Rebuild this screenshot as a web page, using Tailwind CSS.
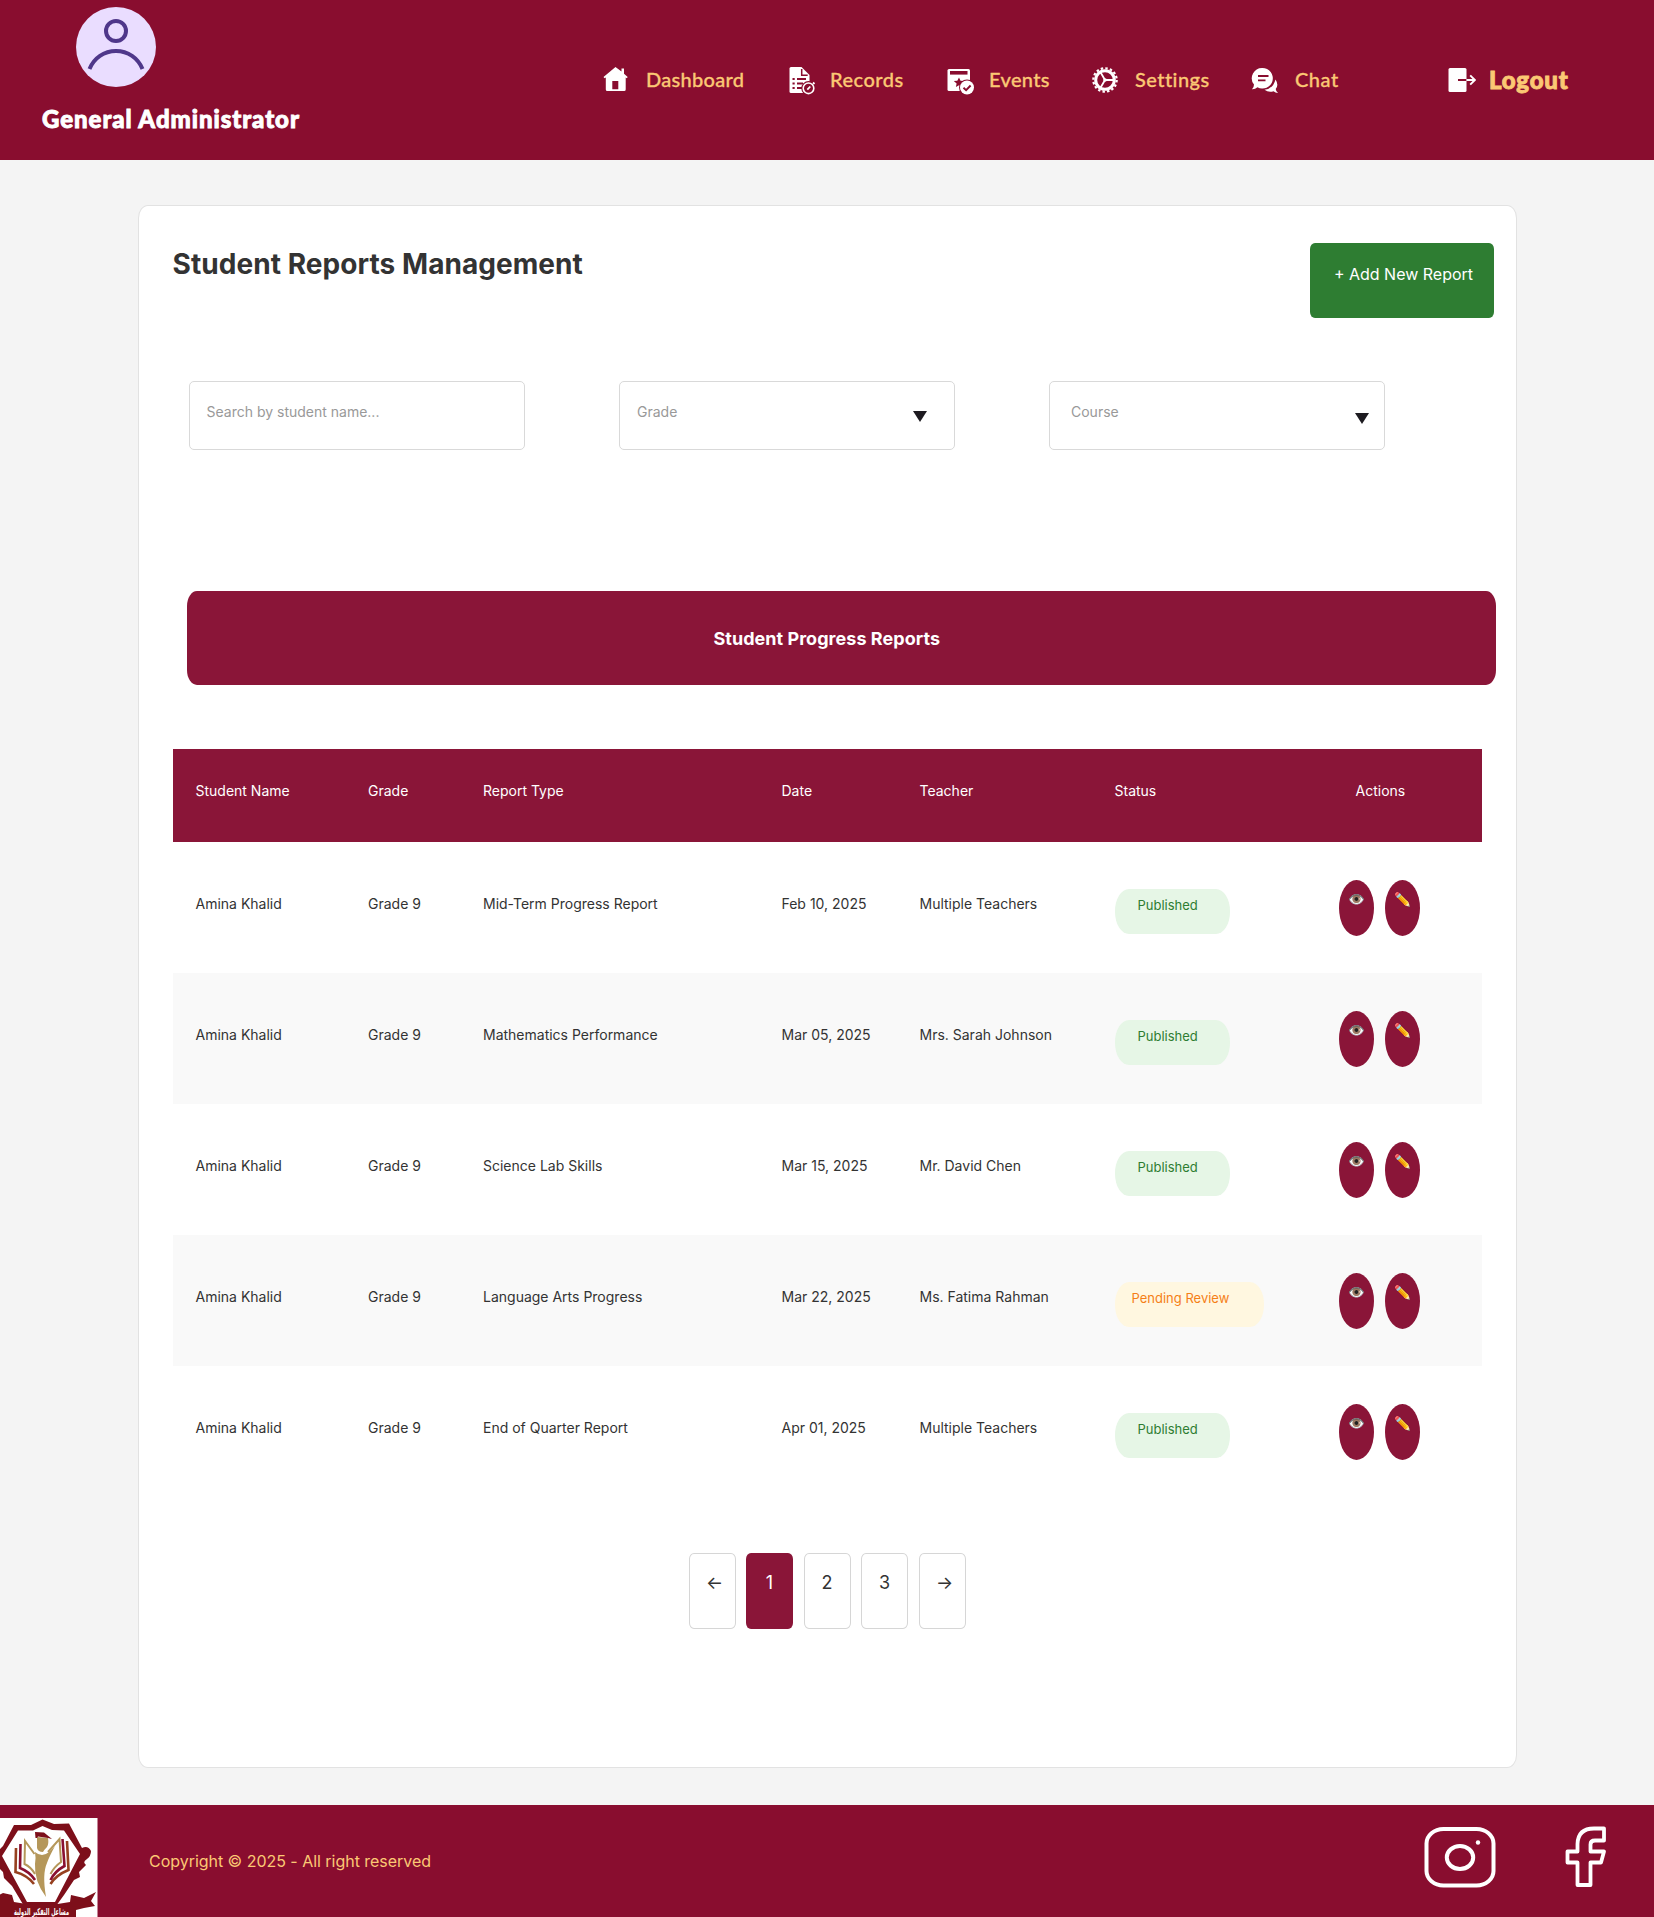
<!DOCTYPE html>
<html lang="en">
<head>
<meta charset="utf-8">
<title>Student Reports Management</title>
<script src="https://cdn.jsdelivr.net/npm/@tailwindcss/browser@4"></script>
</head>
<body class="w-[1654px] h-[1917px] overflow-hidden bg-[#f4f4f4] font-['Inter',sans-serif] text-[#333333]">

<header class="flex h-[160px] bg-[#890d2f] font-['Lato',sans-serif]">
  <div class="w-[603px] pl-[42px] pt-[7px] shrink-0">
    <svg class="ml-[34px] block" width="80" height="80" viewBox="0 0 80 80" fill="none">
      <circle cx="40" cy="40" r="40" fill="#eaddff"/>
      <circle cx="40" cy="24" r="10" stroke="#4f378a" stroke-width="4"/>
      <path d="M13.5 62C18 51 28 44 40 44s22 7 26.500 18" stroke="#4f378a" stroke-width="4"/>
    </svg>
    <div class="mt-[16px] w-max text-[24px] leading-[32px] font-black text-white tracking-[0.95px] [-webkit-text-stroke:0.9px_white]">General Administrator</div>
  </div>
  <nav class="flex h-[160px] items-center text-[20px] font-medium text-[#fbc874]">
    <a class="flex w-[186px] items-center">
      <span class="w-[43px]"><svg width="26" height="30" viewBox="0 0 26 30" fill="#fff"><path d="M12.500 2 L18.500 6.500 V3.500 H21 V8.800 L24.700 12 L23.800 13.200 L22.700 12.500 V24.500 Q22.700 26 21.200 26 H4.300 Q2.800 26 2.800 24.500 V12.500 L1.600 13.200 L.5 12 Z M9.300 16 V24.200 H15.300 V16 Z" fill-rule="evenodd"/></svg></span>
      <span class="pb-[2px] tracking-[0.3px] [-webkit-text-stroke:0.3px_#fbc874]">Dashboard</span>
    </a>
    <a class="flex w-[158px] items-center">
      <span class="w-[41px]"><svg width="28" height="30" viewBox="0 0 28 30" fill="none"><path d="M2 2H12.500L20.500 10V28H2Q.5 28 .5 26.500V3.500Q.5 2 2 2Z" fill="#fff"/><path d="M12.700 4v6.200h6" stroke="#890d2f" stroke-width="1.500"/><path d="M3.500 14h2.200M8 14h9M3.500 18.500h2.200M8 18.500h6M3.500 23h2.200M8 23h5" stroke="#890d2f" stroke-width="1.800"/><circle cx="19.500" cy="23.300" r="7.200" fill="#890d2f"/><circle cx="19.500" cy="23.300" r="5.300" stroke="#fff" stroke-width="1.600"/><path d="M18.300 24.700l3-3.200M24 17.500l1.500 1.500" stroke="#fff" stroke-width="1.800"/></svg></span>
      <span class="pb-[2px] tracking-[0.5px] [-webkit-text-stroke:0.3px_#fbc874]">Records</span>
    </a>
    <a class="flex w-[145px] items-center">
      <span class="w-[42px]"><svg width="28" height="30" viewBox="0 0 28 30" fill="none"><path d="M2 4H21.500Q23 4 23 5.500V26H2Q.5 26 .5 24.500V5.500Q.5 4 2 4Z" fill="#fff"/><path d="M3 6h17.500v3.600H3z" fill="#890d2f"/><path d="M12 12.500l1.500 3.200 3.500.4-2.600 2.400.7 3.500-3.100-1.700-3.100 1.700.7-3.500L6.800 16.100l3.500-.4z" fill="#890d2f"/><circle cx="20" cy="22.500" r="8" fill="#890d2f"/><circle cx="20" cy="22.500" r="7" fill="#fff"/><path d="M16.500 22.700l2.600 2.400 4.500-4.600" stroke="#890d2f" stroke-width="1.900"/></svg></span>
      <span class="pb-[2px] tracking-[0.35px] [-webkit-text-stroke:0.3px_#fbc874]">Events</span>
    </a>
    <a class="flex w-[159px] items-center">
      <span class="w-[43px]"><svg width="26" height="26" viewBox="0 0 26 26" fill="none" stroke="#fff"><circle cx="13" cy="13" r="9.300" stroke-width="3"/><circle cx="13" cy="13" r="11.700" stroke-width="2.200" stroke-dasharray="2.450 2.139"/><path d="M13 13h9.500M13 13L8.200 4.800M13 13L8.200 21.200" stroke-width="1.800"/><circle cx="13" cy="13" r="1.800" fill="#fff" stroke="none"/></svg></span>
      <span class="pb-[2px] tracking-[0.45px] [-webkit-text-stroke:0.3px_#fbc874]">Settings</span>
    </a>
    <a class="flex w-[197px] items-center">
      <span class="w-[44px]"><svg width="28" height="28" viewBox="0 0 28 28" fill="none"><path d="M11.500 2a10.300 10.300 0 1 1-5 19.300Q4 23.500 1 23.300 3 21.500 3 18.600A10.300 10.300 0 0 1 11.500 2Z" fill="#fff"/><path d="M7 10h10.500M7 14.300h7.500" stroke="#890d2f" stroke-width="1.800"/><path d="M24.500 13.500q3.600 5.500.2 9.500.3 2.500 2.300 4-2.300.1-4.500-1.700-5 1.600-9-1.600 8.500-.7 11-10.200Z" fill="#fff"/></svg></span>
      <span class="pb-[2px] tracking-[0.5px] [-webkit-text-stroke:0.3px_#fbc874]">Chat</span>
    </a>
    <a class="flex items-center text-[24px] font-black">
      <span class="w-[41px]"><svg width="28" height="26" viewBox="0 0 28 26" fill="none"><path d="M2 1H17Q18.500 1 18.500 2.500V23.500Q18.500 25 17 25H2Q.5 25 .5 23.500V2.500Q.5 1 2 1Z" fill="#fff"/><path d="M10 13h8.500" stroke="#890d2f" stroke-width="2"/><path d="M18.500 13h8M22.200 8.300l4.700 4.700-4.700 4.700" stroke="#fff" stroke-width="1.900"/></svg></span>
      <span class="tracking-[0.8px] [-webkit-text-stroke:0.9px_#fbc874]">Logout</span>
    </a>
  </nav>
</header>

<main class="mx-auto mt-[45px] h-[1562.500px] w-[1379px] rounded-[10px/13px] border border-[#e2e2e2] bg-white">
  <div class="flex h-[112.500px] items-start justify-between pl-[34px] pr-[22px] pt-[37px]">
    <h1 class="mt-[4px] text-[28px] leading-[34px] font-bold tracking-[0.06px]">Student Reports Management</h1>
    <button class="h-[75px] w-[184px] rounded-[5px/6px] bg-[#2e7d32] pl-[4px] pb-[14px] text-[16px] text-white">+ Add New Report</button>
  </div>

  <div class="mt-[62.500px] flex gap-[93.500px] pl-[50px] text-[14px] text-[#999999]">
    <div class="flex h-[69px] w-[336.500px] items-center rounded-[5px] border-[1.500px] border-[#d9d9d9] pb-[9px] pl-[17px]">Search by student name...</div>
    <div class="flex h-[69px] w-[336.500px] items-center justify-between rounded-[5px] border-[1.500px] border-[#d9d9d9] pb-[9px] pl-[17.500px] pr-[27px]">Grade
      <svg class="mt-[10px]" width="14" height="11" viewBox="0 0 14 11"><path d="M0 0H14L7 11Z" fill="#1d1b20"/></svg></div>
    <div class="flex h-[69px] w-[336.500px] items-center justify-between rounded-[5px] border-[1.500px] border-[#d9d9d9] pb-[9px] pl-[21.500px] pr-[15px]">Course
      <svg class="mt-[14px]" width="14" height="11" viewBox="0 0 14 11"><path d="M0 0H14L7 11Z" fill="#1d1b20"/></svg></div>
  </div>

  <div class="ml-[48px] mt-[141px] flex h-[93.500px] w-[1309.500px] items-center justify-center rounded-[10px/15px] bg-[#8a1538] pr-[29px] pt-[2px] text-[18px] font-bold tracking-[0.04px] text-white">Student Progress Reports</div>

  <section class="ml-[34px] mt-[64px] w-[1309.500px] text-[14px] leading-[20px]">
    <div class="grid h-[93.500px] grid-cols-[172.500px_115px_298.500px_138px_195px_220px_1fr] bg-[#8a1538] pl-[23px] pt-[32.500px] text-white">
      <span>Student Name</span><span>Grade</span><span>Report Type</span><span>Date</span><span>Teacher</span><span>Status</span><span class="pl-[21px]">Actions</span>
    </div>
    <div id="rows"></div>
  </section>

  <div class="mt-[56px] flex justify-center gap-[10.500px] text-[18px]">
    <div class="flex h-[76px] w-[47px] items-center justify-center rounded-[5px/6px] border border-[#d6d6d6] pb-[18px] pl-[5px]">←</div>
    <div class="flex h-[76px] w-[47px] items-center justify-center rounded-[5px/6px] bg-[#8a1538] pb-[18px] text-white">1</div>
    <div class="flex h-[76px] w-[47px] items-center justify-center rounded-[5px/6px] border border-[#d6d6d6] pb-[18px]">2</div>
    <div class="flex h-[76px] w-[47px] items-center justify-center rounded-[5px/6px] border border-[#d6d6d6] pb-[18px]">3</div>
    <div class="flex h-[76px] w-[47px] items-center justify-center rounded-[5px/6px] border border-[#d6d6d6] pb-[18px] pl-[5px]">→</div>
  </div>
</main>

<footer class="mt-[37.500px] flex h-[112px] overflow-hidden bg-[#890d2f]">
  <svg class="mt-[13px] shrink-0" width="97.500" height="99" viewBox="0 0 97.500 99">
    <path d="M0 0H97.500V99H0Z" fill="#fff"/>
    <path d="M-1 32L3 28 14 7 31 7 42.500 1.500 54 6 69 5.500 82 30Q88 27 91 33 91 38 87 41 82 44 86 47L79 54 80 59 74 62 64 77 56 88 24 88 12 68 4 60 3 54 -1 50Z" fill="#7d0f1a"/>
    <path d="M2 38L18 12.500 33 12.500 42.500 8 52 12 64 12.500 80 36 55 84 27 84Z" fill="#fff"/>
    <g fill="none" stroke-width="2.600">
      <path d="M16 30L15.500 54Q27 57 34 66" stroke="#96401f"/><path d="M67 23L68.500 52Q56 57 50.500 66" stroke="#96401f"/>
      <path d="M20.500 26L20 50Q30 54 35 62" stroke="#8a1030"/><path d="M62.500 21L64.500 48Q55 53 50.500 62" stroke="#8a1030"/>
      <path d="M34.500 36L25 23 24.500 46Q31 49 35 56" stroke="#b5975a" stroke-width="2"/><path d="M48 34L59.500 21 61 44Q54 49 50.500 56" stroke="#b5975a" stroke-width="2"/>
    </g>
    <path d="M37 19L48 20Q49 26 47 29 44 32 43 34 38 34 37 30ZM35 34Q42 40 49 34L55 28Q49 39 47 45 42 56 46 79 34 63 35 46 36 39 35 34Z" fill="#b5975a"/>
    <path d="M35 14L44 14.500 52 21 48 20 38 18.500 37 20 35.500 20Z" fill="#7d0f1a"/>
    <path d="M-1 77L3 75 12 77 14 84Q42 90 70 84L71 77 84 80 96 74 91 83 95 88 84 90 76 92V99H-1Z" fill="#7d0f1a"/>
    <text x="41.500" y="96.500" text-anchor="middle" textLength="55" lengthAdjust="spacingAndGlyphs" font-family="DejaVu Sans, sans-serif" font-weight="bold" font-size="9.500" fill="#fff">مشاعل التفكير الدولية</text>
  </svg>
  <p class="ml-[51.500px] mt-[46px] w-[1275px] text-[16px] leading-[20px] tracking-[-0.030px] text-[#fbc874]">Copyright © 2025 - All right reserved</p>
  <svg class="mt-[22px] shrink-0" width="72" height="62" viewBox="0 0 72 62" fill="none" stroke="#fff" stroke-width="4">
    <rect x="2.500" y="2" width="67" height="56.500" rx="17" ry="14.500"/><ellipse cx="36" cy="30.500" rx="13.200" ry="11.500"/><circle cx="54" cy="15.500" r="2.200" fill="#fff" stroke="none"/>
  </svg>
  <svg class="ml-[69px] mt-[21px] shrink-0" width="42" height="62" viewBox="0 0 42 62" fill="none" stroke="#fff" stroke-width="3.800" stroke-linejoin="round"><path d="M39 2.500V14.500H30Q25.500 14.500 25.500 18.500V25.500H39L36 36.500H25.500V59H12.500V36.500H2.500V25.500H12.500V18Q13 2.500 29 2.500Z"/></svg>
</footer>

<script>
const rows = [
  ["Mid-Term Progress Report", "Feb 10, 2025", "Multiple Teachers", true],
  ["Mathematics Performance", "Mar 05, 2025", "Mrs. Sarah Johnson", true],
  ["Science Lab Skills", "Mar 15, 2025", "Mr. David Chen", true],
  ["Language Arts Progress", "Mar 22, 2025", "Ms. Fatima Rahman", false],
  ["End of Quarter Report", "Apr 01, 2025", "Multiple Teachers", true],
];
const badge = ok => ok
  ? `<span class="mt-[47px] h-[45px] w-[115px] rounded-[14px/22px] bg-[#e6f6e6] pl-[23px] pt-[6px] text-[13px] text-[#2e7d32]">Published</span>`
  : `<span class="mt-[47px] h-[45px] w-[149.500px] rounded-[14px/22px] bg-[#fff7e0] pl-[17px] pt-[6px] text-[13px] text-[#f57f17]">Pending Review</span>`;
const action = icon => `<span class="flex h-[56px] w-[35px] justify-center rounded-[50%] bg-[#8a1538] pt-[9px] text-[13.500px]">${icon}</span>`;
document.getElementById("rows").innerHTML = rows.map(([type, date, teacher, ok]) => `
  <div class="grid h-[131px] grid-cols-[172.500px_115px_298.500px_138px_195px_220px_1fr] pl-[23px] even:bg-[#f9f9f9]">
    <span class="pt-[52px]">Amina Khalid</span><span class="pt-[52px]">Grade 9</span><span class="pt-[52px]">${type}</span>
    <span class="pt-[52px]">${date}</span><span class="pt-[52px]">${teacher}</span>${badge(ok)}
    <span class="flex gap-[11px] pl-[4px] pt-[38px]">${action("👁️")}${action("✏️")}</span>
  </div>`).join("");
</script>
</body>
</html>
